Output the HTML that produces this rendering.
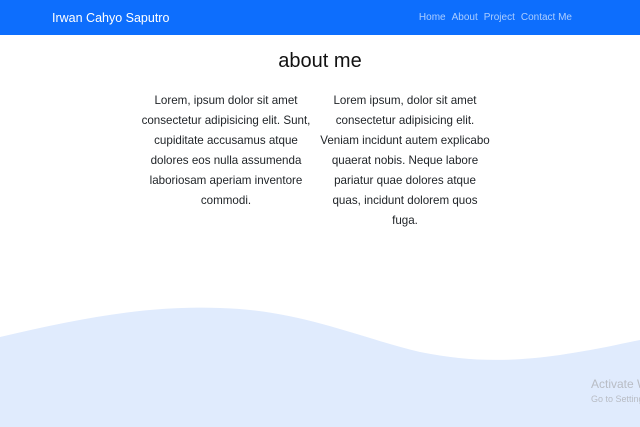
<!DOCTYPE html>
<html><head><style>
body{margin:0;width:640px;height:427px;overflow:hidden;background:#fff;font-family:"Liberation Sans",sans-serif;position:relative}
nav{position:absolute;left:0;top:0;width:640px;height:35px;background:#0d6efd}
.brand{position:absolute;left:52px;top:11px;color:#fff;font-size:12.5px}
.links{position:absolute;right:68px;top:12px;font-size:10px;color:rgba(255,255,255,.65);white-space:nowrap}
.links span{margin-left:6px}
h1{position:absolute;left:0;width:640px;top:50px;margin:0;text-align:center;font-size:20px;font-weight:normal;color:#111}
.col{position:absolute;top:91px;width:190px;text-align:center;font-size:11.6px;line-height:20px;color:#212529;white-space:nowrap}
svg{position:absolute;left:0;top:0}
.act{position:absolute;left:591px;top:377px;color:#b8bcc4;font-size:12px;white-space:nowrap}
.act2{position:absolute;left:591px;top:394px;color:#b8bcc4;font-size:9px;white-space:nowrap}
</style></head><body>
<svg width="640" height="427"><path d="M0 337 C80 318 150 305 220 308 C300 310 360 338 420 352 C470 362 510 362 560 355 C600 349 620 344 640 340 L640 427 L0 427 Z" fill="#e0ebfd"/></svg>
<nav><div class="brand">Irwan Cahyo Saputro</div><div class="links"><span>Home</span><span>About</span><span>Project</span><span>Contact Me</span></div></nav>
<h1>about me</h1>
<div class="col" style="left:131px">Lorem, ipsum dolor sit amet<br>consectetur adipisicing elit. Sunt,<br>cupiditate accusamus atque<br>dolores eos nulla assumenda<br>laboriosam aperiam inventore<br>commodi.</div>
<div class="col" style="left:310px">Lorem ipsum, dolor sit amet<br>consectetur adipisicing elit.<br>Veniam incidunt autem explicabo<br>quaerat nobis. Neque labore<br>pariatur quae dolores atque<br>quas, incidunt dolorem quos<br>fuga.</div>
<div class="act">Activate W</div><div class="act2">Go to Settings</div>
</body></html>
